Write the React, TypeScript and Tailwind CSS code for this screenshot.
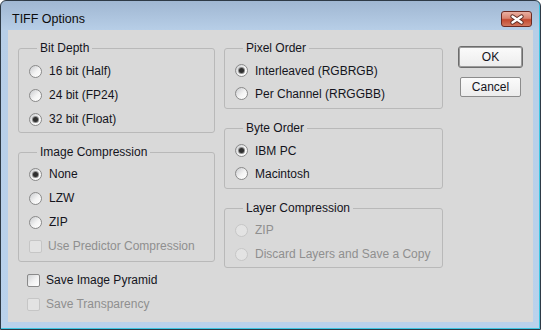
import React from "react";

type OptionProps = {
  label: string;
  checked?: boolean;
  disabled?: boolean;
  h?: "23" | "24";
};

function RadioDot({ checked, disabled }: { checked?: boolean; disabled?: boolean }) {
  return (
    <span
      className={`flex h-[13px] w-[13px] shrink-0 items-center justify-center rounded-full border ${
        disabled
          ? "border-[#c6c6c6] bg-[#e3e3e3]"
          : "border-[#8a8a8a] bg-[linear-gradient(135deg,#c9cbce_0%,#f4f4f4_55%,#ffffff_100%)]"
      }`}
    >
      {checked && (
        <span className="h-[5px] w-[5px] rounded-full bg-[#2f2f2f] shadow-[0_0_0_1px_#8d8d8d]" />
      )}
    </span>
  );
}

function CheckBox({ disabled }: { disabled?: boolean }) {
  return (
    <span
      className={`h-[13px] w-[13px] shrink-0 rounded-[2px] border ${
        disabled
          ? "border-[#c6c6c6] bg-[#e3e3e3]"
          : "border-[#8a8a8a] bg-[linear-gradient(135deg,#d2d4d6_0%,#f3f3f3_55%,#ffffff_100%)]"
      }`}
    />
  );
}

function Radio({ label, checked, disabled, h = "24" }: OptionProps) {
  return (
    <div className={`flex items-center gap-[7px] ${h === "23" ? "h-[23px]" : "h-[24px]"}`}>
      <RadioDot checked={checked} disabled={disabled} />
      <span className={disabled ? "text-[#8f8f8f]" : "text-[#14141c]"}>{label}</span>
    </div>
  );
}

function Check({ label, disabled }: OptionProps) {
  return (
    <div className="flex h-[24px] items-center gap-[6px]">
      <CheckBox disabled={disabled} />
      <span className={disabled ? "text-[#8f8f8f]" : "text-[#14141c]"}>{label}</span>
    </div>
  );
}

function Group({
  title,
  className,
  children,
}: {
  title: string;
  className: string;
  children: React.ReactNode;
}) {
  return (
    <fieldset className={`rounded-[3px] border border-[#b9b9b9] pl-[10px] pr-[6px] ${className}`}>
      <legend className="ml-[8px] px-[3px] leading-[16px] text-[#14141c]">{title}</legend>
      {children}
    </fieldset>
  );
}

export default function App() {
  return (
    <div className="flex h-[330px] w-[541px] flex-col overflow-hidden rounded-t-[6px] border border-[#2e3a46] bg-[linear-gradient(to_bottom,#a0b7d2_0px,#b7cee7_29px,#bad2ec_100%)] text-[12px] shadow-[inset_-1px_-1px_0_#3cc6e2] [font-family:'Liberation_Sans',Arial,sans-serif]">
      {/* title bar */}
      <div className="flex h-[29px] shrink-0 items-center justify-between pl-[11px] pr-[8px] pt-[7px]">
        <span className="text-[12.5px] text-[#0c0c0c]">TIFF Options</span>
        <div className="flex h-[16px] w-[31px] items-center justify-center rounded-[3px] border border-[#6b2a22] bg-[linear-gradient(to_bottom,#eab0a2_0%,#d98470_45%,#c4492f_55%,#d2775f_100%)]">
          <svg width="16" height="11" viewBox="0 0 16 11">
            <path d="M3.5 2.5 L12.5 8.5 M12.5 2.5 L3.5 8.5" stroke="#5b2a22" strokeWidth="4.2" strokeLinecap="round" />
            <path d="M3.5 2.5 L12.5 8.5 M12.5 2.5 L3.5 8.5" stroke="#ffffff" strokeWidth="2.4" strokeLinecap="round" />
          </svg>
        </div>
      </div>

      {/* client area */}
      <div className="mx-[7px] mb-[7px] flex flex-1 bg-[#d9d9d9] pl-[10px] pt-[10px]">
        <div className="flex w-[197px] flex-col">
          <Group title="Bit Depth" className="pt-[3px] pb-[1px]">
            <Radio label="16 bit (Half)" />
            <Radio label="24 bit (FP24)" />
            <Radio label="32 bit (Float)" checked />
          </Group>
          <Group title="Image Compression" className="mt-[11px] pt-[2px] pb-[3px]">
            <Radio label="None" checked />
            <Radio label="LZW" />
            <Radio label="ZIP" />
            <Check label="Use Predictor Compression" disabled />
          </Group>
          <div className="mt-[6px] pl-[9px]">
            <Check label="Save Image Pyramid" />
            <Check label="Save Transparency" disabled />
          </div>
        </div>

        <div className="ml-[9px] flex w-[219px] flex-col">
          <Group title="Pixel Order" className="pt-[3px] pb-[3px]">
            <Radio label="Interleaved (RGBRGB)" checked h="23" />
            <Radio label="Per Channel (RRGGBB)" h="23" />
          </Group>
          <Group title="Byte Order" className="mt-[11px] pt-[3px] pb-[3px]">
            <Radio label="IBM PC" checked h="23" />
            <Radio label="Macintosh" h="23" />
          </Group>
          <Group title="Layer Compression" className="mt-[11px] pt-[2px] pb-[1px]">
            <Radio label="ZIP" disabled />
            <Radio label="Discard Layers and Save a Copy" disabled />
          </Group>
        </div>

        <div className="ml-[15px] flex w-[65px] flex-col items-center pt-[6px]">
          <button className="flex h-[22px] w-[65px] items-center justify-center rounded-[3px] border border-[#6c6c6c] bg-[linear-gradient(to_bottom,#fbfbfb,#ececec)] text-[#14141c] shadow-[inset_0_0_0_1px_#9a9a9a]">
            OK
          </button>
          <button className="mt-[9px] flex h-[20px] w-[61px] items-center justify-center rounded-[2px] border border-[#8c8c8c] bg-[linear-gradient(to_bottom,#fbfbfb,#ececec)] text-[#14141c]">
            Cancel
          </button>
        </div>
      </div>
    </div>
  );
}
